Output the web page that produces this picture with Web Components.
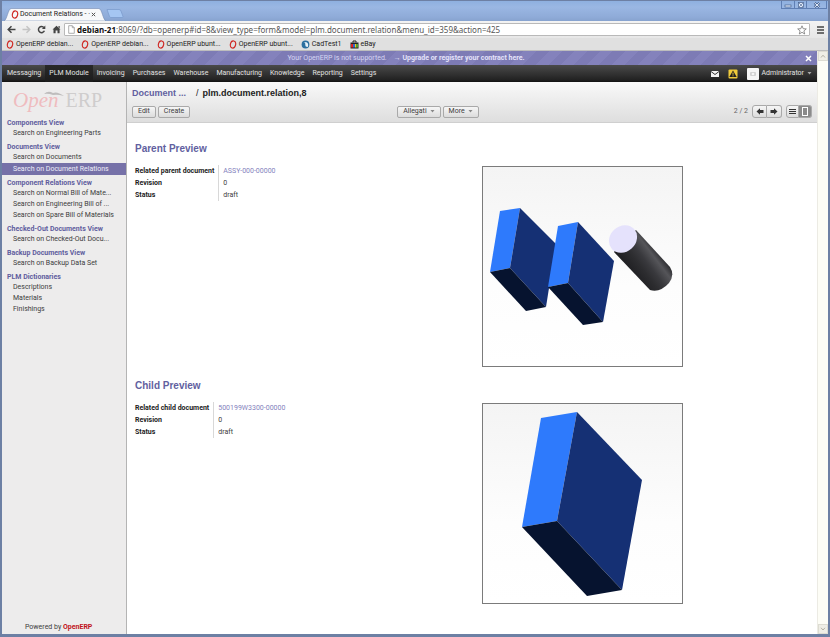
<!DOCTYPE html>
<html lang="en">
<head>
<meta charset="utf-8">
<title>Document Relations - OpenERP</title>
<style>
html,body{margin:0;height:100%}
body{font:7px/11px Roboto,"Liberation Sans",sans-serif;color:#3c3c3c;background:#6d80a4}
</style>
</head>
<body>
<app-window>
  <tab-strip slot="chrome" label="Document Relations - ·"></tab-strip>
  <address-bar slot="chrome" host="debian-21" path=":8069/?db=openerp#id=8&amp;view_type=form&amp;model=plm.document.relation&amp;menu_id=359&amp;action=425"></address-bar>
  <bookmark-bar slot="chrome">
    <book-mark kind="opera">OpenERP debian...</book-mark>
    <book-mark kind="opera">OpenERP debian...</book-mark>
    <book-mark kind="opera">OpenERP ubunt...</book-mark>
    <book-mark kind="opera">OpenERP ubunt...</book-mark>
    <book-mark kind="globe">CadTest1</book-mark>
    <book-mark kind="bag">eBay</book-mark>
  </bookmark-bar>
  <notice-bar slot="page">Your OpenERP is not supported.</notice-bar>
  <nav-bar slot="page" items="Messaging|PLM Module|Invoicing|Purchases|Warehouse|Manufacturing|Knowledge|Reporting|Settings" current="PLM Module"></nav-bar>
  <work-area slot="page">
    <side-menu slot="side">
      <menu-group label="Components View" items="Search on Engineering Parts"></menu-group>
      <menu-group label="Documents View" items="Search on Documents|Search on Document Relations" current="Search on Document Relations"></menu-group>
      <menu-group label="Component Relations View" items="Search on Normal Bill of Mate...|Search on Engineering Bill of ...|Search on Spare Bill of Materials"></menu-group>
      <menu-group label="Checked-Out Documents View" items="Search on Checked-Out Docu..."></menu-group>
      <menu-group label="Backup Documents View" items="Search on Backup Data Set"></menu-group>
      <menu-group label="PLM Dictionaries" items="Descriptions|Materials|Finishings"></menu-group>
    </side-menu>
    <form-header></form-header>
    <preview-section heading="Parent Preview" label="Related parent document" value="ASSY-000-00000" revision="0" status="draft">
      <part-view model="assembly"></part-view>
    </preview-section>
    <preview-section heading="Child Preview" label="Related child document" value="500199W3300-00000" revision="0" status="draft">
      <part-view model="block"></part-view>
    </preview-section>
  </work-area>
</app-window>
<script>
const base = `:host,*{box-sizing:border-box}
button{font:inherit;color:inherit;margin:0;padding:0;border:0;background:none;display:flex;align-items:center;justify-content:center}
a{color:inherit;text-decoration:none}svg{display:block;flex:none}`;
function define(name, render) {
  customElements.define(name, class extends HTMLElement {
    constructor() { super(); this.attachShadow({ mode: 'open' }); }
    connectedCallback() {
      const [css, html] = render(n => (this.getAttribute(n) || '').replace(/&/g, '&amp;'));
      this.shadowRoot.innerHTML = '<style>' + base + css + '</style>' + html;
    }
  });
}
const operaIcon = `<svg width="8" height="9" viewBox="0 0 8 9"><ellipse cx="4" cy="4.5" rx="2.6" ry="3.6" fill="none" stroke="#cf2a26" stroke-width="1.2" transform="rotate(14 4 4.5)"/></svg>`;

define('app-window', () => [`
:host{display:flex;flex-direction:column;min-height:100vh;border:solid #6d80a4;border-width:1px 2px 3px;background:#fff}
.body{flex:1;display:flex}
.page{flex:1;min-width:0;display:flex;flex-direction:column}
`, `<slot name="chrome"></slot><div class="body"><div class="page"><slot name="page"></slot></div><scroll-rail></scroll-rail></div>`]);

define('scroll-rail', () => [`
:host{display:flex;flex-direction:column;justify-content:space-between;width:11px;background:#fdfdf6;border-left:1px solid #ecebe4}
button{height:10px;background:#efeee6;border:1px solid #dddcd2}
`, `<button aria-label="Scroll up"><svg width="6" height="4"><path d="M1 3.5 3 1.2 5 3.5" fill="none" stroke="#b3b1a4"/></svg></button>
<button aria-label="Scroll down"><svg width="6" height="4"><path d="M1 .8 3 3 5 .8" fill="none" stroke="#b3b1a4"/></svg></button>`]);

define('tab-strip', attr => [`
:host{display:flex;align-items:flex-end;height:20px;padding-left:2px;background:linear-gradient(#8eb0e0,#9ab7e3 30%,#8fabd8 80%,#87a3cf);color:#222}
.tab{position:relative;display:flex;align-items:center;height:13px;width:102px;padding:0 5px 0 7px;line-height:13px}
.tab .shape{position:absolute;inset:0;width:100%;height:100%}
.tab span,.tab .ico,.tab button{position:relative}
.tab span{flex:1;margin-left:1px;white-space:nowrap}
.tab button{width:8px;height:9px;margin-right:4px}
.new{align-self:center;width:18px;height:9px;margin-top:5px}
.win{align-self:flex-start;margin-left:auto;display:flex;height:8px;margin-right:1px;border:1px solid #5f7fb4;border-top:0}
.win button{width:12px;height:7px}
.win button+button{border-left:1px solid #5f7fb4}
.win button:last-child{width:20px}
`, `<div class="tab"><svg class="shape" viewBox="0 0 102 13" preserveAspectRatio="none"><path d="M0 13C3 12 4 1 7 .5H95C98 1 99 12 102 13Z" fill="#f7f8fa" stroke="#7389b1" stroke-width=".6"/></svg>
<div class="ico">${operaIcon}</div><span>${attr('label')}</span><button aria-label="Close tab"><svg width="5" height="5"><path d="M.8.8 4.2 4.2M4.2.8.8 4.2" stroke="#555"/></svg></button></div>
<button class="new" aria-label="New tab"><svg width="18" height="9"><path d="M1 .5H13Q14.500.5 15 2L17 7.500Q17 8.500 16 8.500H5Q4 8.500 3.500 7.500Z" fill="#a5c6f2" stroke="#7c9ccd" stroke-width=".8"/></svg></button>
<div class="win"><button aria-label="Minimize"><svg width="8" height="6"><rect x="1" y="3" width="6" height="2" fill="#dfe9f8" stroke="#46618f" stroke-width=".7"/></svg></button>
<button aria-label="Maximize"><svg width="8" height="6"><rect x="1.500" y=".5" width="5" height="5" fill="#dfe9f8" stroke="#46618f" stroke-width=".7"/><path d="M2 1 6 5M6 1 2 5" stroke="#46618f" stroke-width=".6"/></svg></button>
<button aria-label="Close"><svg width="8" height="6"><path d="M1.500.8 6.500 5.200M6.500.8 1.500 5.200" stroke="#46618f" stroke-width="2.200"/><path d="M1.500.8 6.500 5.200M6.500.8 1.500 5.200" stroke="#eaf1fb"/></svg></button></div>`]);

define('address-bar', attr => [`
:host{display:flex;align-items:center;height:17px;padding:0 4px 0 4px;background:linear-gradient(#f3f3f3,#e7e7e7)}
.nav{display:flex;gap:5px}
.nav button{width:10px;height:12px}
form{flex:1;display:flex;align-items:center;height:13px;margin:0 7px 0 3px;padding:0 2px 0 3px;background:#fff;border:1px solid #b9b9b9;border-radius:1px;font:8px/11px "Noto Sans","Open Sans",sans-serif;color:#555;white-space:nowrap}
form b{color:#111;margin-left:2px}
form span{flex:1}
`, `<div class="nav"><button aria-label="Back"><svg width="9" height="9"><path d="M8.500 4.500H1.500M4.500 1.200 1.200 4.500 4.500 7.800" fill="none" stroke="#444" stroke-width="1.500"/></svg></button>
<button aria-label="Forward"><svg width="9" height="9"><path d="M.5 4.500H7.500M4.500 1.200 7.800 4.500 4.500 7.800" fill="none" stroke="#c4c4c4" stroke-width="1.500"/></svg></button>
<button aria-label="Reload"><svg width="9" height="9"><path d="M7 2.600A3.100 3.100 0 1 0 7.400 5.800" fill="none" stroke="#444" stroke-width="1.500"/><path d="M8.300.6V4H4.900Z" fill="#444"/></svg></button>
<button aria-label="Home"><svg width="9" height="9"><path d="M4.500.8 8.500 4.600H7.600V8.200H5.500V5.600H3.600V8.200H1.500V4.600H.5Z" fill="#444"/><path d="M6.500 1H7.700V3.500L6.500 2.500Z" fill="#444"/></svg></button></div>
<form><svg width="7" height="9"><path d="M.7.7H4.300L6.300 2.700V8.300H.7ZM4.300.7V2.700H6.300" fill="#fff" stroke="#999" stroke-width=".8"/></svg><b>${attr('host')}</b><span>${attr('path')}</span>
<button type="button" aria-label="Bookmark this page"><svg width="10" height="10"><path d="M5 .8 6.200 3.700 9.300 3.900 6.900 5.900 7.700 9 5 7.300 2.300 9 3.100 5.900.7 3.900 3.800 3.700Z" fill="#fff" stroke="#777" stroke-width=".8"/></svg></button></form>
<button aria-label="Menu"><svg width="7" height="8"><path d="M0 1H7M0 4H7M0 7H7" stroke="#444" stroke-width="1.700"/></svg></button>`]);

define('bookmark-bar', () => [`
:host{display:flex;align-items:center;gap:8px;height:13px;padding:0 4px;background:#e0e0e0;color:#222;border-bottom:1px solid #bdbdbd}
`, `<slot></slot>`]);

const markIcons = {
  opera: operaIcon,
  globe: `<svg width="9" height="9"><circle cx="4.500" cy="4.500" r="3.900" fill="#2c6f9f"/><path d="M2.200 2Q4.500 2 4.300 4.500T6.800 7Q8 3.500 5.500 2.200Z" fill="#e6f2fa"/></svg>`,
  bag: `<svg width="9" height="9"><path d="M3 2.500V1H6V2.500" fill="none" stroke="#222"/><rect x=".5" y="2.500" width="8" height="6" fill="#222"/><rect x="1" y="4" width="2" height="3.500" fill="#d22"/><rect x="3" y="4" width="2" height="3.500" fill="#36c"/><rect x="5" y="4" width="1.500" height="3.500" fill="#ec2"/><rect x="6.500" y="4" width="1.500" height="3.500" fill="#4a3"/></svg>`
};
define('book-mark', attr => [`
:host{display:block}a{display:flex;align-items:center;gap:2px;white-space:nowrap}
`, `<a href="#">${markIcons[attr('kind')]}<slot></slot></a>`]);

define('notice-bar', () => [`
:host{display:flex;align-items:center;height:14px;padding:0 5px;color:#d6d5f2;white-space:nowrap;background:repeating-linear-gradient(135deg,#7d7bb5 0 9px,#8482bc 9px 18px)}
p{flex:1;margin:0;display:flex;justify-content:center;gap:7px}
a{font-weight:700;color:#e4e3fa}
`, `<p><slot></slot><a href="#">→ Upgrade or register your contract here.</a></p><button aria-label="Close notice"><svg width="7" height="7"><path d="M1 1 6 6M6 1 1 6" stroke="#fff" stroke-width="1.500"/></svg></button>`]);

define('nav-bar', attr => [`
:host{display:flex;align-items:stretch;height:17px;padding:0 5px 0 1px;color:#e2e2e2;background:linear-gradient(#4a4a4a,#232323 85%,#111)}
nav{display:flex;flex:1}
nav a{display:flex;align-items:center;padding:0 4px}
nav a[aria-current]{background:linear-gradient(#292929,#1c1c1c)}
.tools{display:flex;align-items:center;gap:9px}
.user{gap:3px}
`, `<nav>${attr('items').split('|').map(t => `<a href="#"${t === attr('current') ? ' aria-current="page"' : ''}>${t}</a>`).join('')}</nav>
<div class="tools"><button aria-label="Messages"><svg width="8" height="6"><rect width="8" height="6" fill="#f3f3f3"/><path d="M0 .5 4 3.500 8 .5" fill="none" stroke="#333"/></svg></button>
<button aria-label="Warning"><svg width="10" height="10"><rect x=".5" y=".5" width="9" height="9" rx="1" fill="#f0cb3b"/><path d="M5 1.500 8.700 8H1.300Z" fill="#222"/><path d="M5 3.500V5.700M5 6.300V7.300" stroke="#f0cb3b"/></svg></button>
<button class="user"><svg width="12" height="12"><rect width="12" height="12" rx="1" fill="#f6f6f6"/><rect x="3" y="4" width="6" height="4" rx="1" fill="#d3d3d3"/><circle cx="6" cy="6" r="1.300" fill="#f6f6f6"/></svg>Administrator<svg width="5" height="3"><path d="M.5 0H4.500L2.500 2.500Z" fill="#aaa"/></svg></button></div>`]);

define('work-area', () => [`
:host{flex:1;display:flex}
main{flex:1;min-width:0;background:#fff}
`, `<slot name="side"></slot><main><slot></slot></main>`]);

define('side-menu', () => [`
:host{display:flex;flex-direction:column;flex:none;width:125px;background:#edecec;border-right:1px solid #b4b4b4}
.logo{position:relative;display:flex;align-items:center;gap:7px;height:36px;padding-left:11px;font:20px/36px "Liberation Serif",serif;color:#cfcdcd}
.logo i{font-size:21px;color:#efbcbf}
.logo svg{position:absolute;left:42px;top:9px}
nav{flex:1;display:flex;flex-direction:column;gap:3px}
footer{padding:0 0 0 23px;line-height:13px}
footer a{font-weight:700;color:#c0141b}
`, `<div class="logo"><i>Open</i><span>ERP</span><svg width="20" height="6"><path d="M0 3Q4 -1 9 2Q13 0 20 5Q13 3 9 4Q4 2 0 3Z" fill="#bfbdbd"/></svg></div><nav><slot></slot></nav><footer>Powered by <a href="#">OpenERP</a></footer>`]);

define('menu-group', attr => [`
:host{display:block}
h3{margin:0;padding-left:5px;font-size:7px;line-height:10px;color:#5f5d9e}
a{display:block;padding-left:11px;line-height:11px;white-space:nowrap}
a[aria-current]{background:#7671a8;color:#eeedf8;line-height:12px}
`, `<h3>${attr('label')}</h3>${attr('items').split('|').map(t => `<a href="#"${t === attr('current') ? ' aria-current="page"' : ''}>${t}</a>`).join('')}`]);

const caret = `<svg width="5" height="3"><path d="M.5 0H4.500L2.500 2.500Z" fill="#888"/></svg>`;
define('form-header', () => [`
:host{display:flex;flex-direction:column;gap:6px;height:41px;padding:5px 5px 0;border-bottom:1px solid #cfcfcf;background:linear-gradient(#f9f9f9,#dedede)}
h1{display:flex;gap:4px;margin:0;font:700 9px/12px "Liberation Sans",sans-serif;color:#222}
h1 a{color:#625fa0;margin-right:6px}
h1 i{font-style:normal;font-weight:400}
.bar{display:grid;grid-template-columns:39fr 61fr}
.row{display:flex;align-items:center;gap:2px}
.row button{height:12px;padding:0 5px;border:1px solid #a9a9a9;border-radius:2px;background:linear-gradient(#f6f6f6,#dcdcdc);gap:3px}
.pager{margin-left:auto;margin-right:2px;color:#666}
.row .set{display:flex;margin-right:2px}
.row .set:last-child{margin:0}
.row .set button{width:15px;height:13px;padding:0}
.row .views button{width:13px}
.row .set button:first-child{border-radius:3px 0 0 3px}
.row .set button+button{border-left:0;border-radius:0 3px 3px 0}
.row .set button[aria-pressed=true]{background:#8b8b8b}
`, `<h1><a href="#">Document ...</a><i>/</i>plm.document.relation,8</h1>
<div class="bar"><div class="row"><button>Edit</button><button>Create</button></div>
<div class="row"><button>Allegati ${caret}</button><button>More ${caret}</button><span class="pager">2 / 2</span>
<div class="set"><button aria-label="Previous"><svg width="8" height="7"><path d="M.5 3.500 4 .3V2H7.500V5H4V6.700Z" fill="#333"/></svg></button><button aria-label="Next"><svg width="8" height="7"><path d="M7.500 3.500 4 .3V2H.5V5H4V6.700Z" fill="#333"/></svg></button></div>
<div class="set views"><button aria-label="List view"><svg width="7" height="5"><path d="M0 .5H7M0 2.500H7M0 4.500H7" stroke="#333"/></svg></button><button aria-label="Form view" aria-pressed="true"><svg width="6" height="9"><rect x=".5" y=".5" width="5" height="8" fill="#8b8b8b" stroke="#fff"/></svg></button></div></div></div>`]);

define('preview-section', attr => [`
:host{display:block;padding:0 8px;margin-top:13px}
:host(:first-of-type){margin-top:20px}
h2{margin:0 0 10px;font:700 10px/12px "Liberation Sans",sans-serif;color:#625fa0}
.cols{display:grid;grid-template-columns:1fr 1fr;gap:20px;align-items:start}
table{border-collapse:collapse;justify-self:start}
th,td{height:12px;padding:0;text-align:left;line-height:12px}
th{color:#222;padding-right:4px}
td{border-left:1px solid #d8d8d8;padding-left:4px}
a{color:#8482bd}
`, `<h2>${attr('heading')}</h2><div class="cols"><table>
<tr><th scope="row">${attr('label')}</th><td><a href="#">${attr('value')}</a></td></tr>
<tr><th scope="row">Revision</th><td>${attr('revision')}</td></tr>
<tr><th scope="row">Status</th><td>${attr('status')}</td></tr></table><slot></slot></div>`]);

const models = {
  assembly: `<path d="M18 45 38 42 28 102 8 106Z" fill="#2e7afc"/><path d="M38 42 74 78 64 141 28 102Z" fill="#153074"/><path d="M8 106 28 102 64 141 44 145Z" fill="#06132f"/>
<path d="M76 60 96 56 86 117 66 121Z" fill="#2e7afc"/><path d="M96 56 132 95 121 156 86 117Z" fill="#153074"/><path d="M66 121 86 117 121 156 101 159Z" fill="#06132f"/>
<defs><linearGradient id="c" gradientUnits="userSpaceOnUse" x1="141" y1="98" x2="170" y2="76"><stop offset="0" stop-color="#1e1e21"/><stop offset=".35" stop-color="#2d2d30"/><stop offset=".55" stop-color="#39393d"/><stop offset=".8" stop-color="#555559"/><stop offset="1" stop-color="#29292c"/></linearGradient></defs>
<path d="M154 64 188 101Q193 109 187 117 178 127 168 124L132 86 141 73Z" fill="url(#c)"/><ellipse cx="141" cy="73" rx="15" ry="12.800" transform="rotate(-42 141 73)" fill="#e5e2fc"/>`,
  block: `<path d="M59 15 95 9 75 118 40 124Z" fill="#2e7afc"/><path d="M95 9 160 77 140 187 75 118Z" fill="#153074"/><path d="M40 124 75 118 140 187 105 193Z" fill="#06132f"/>`
};
define('part-view', attr => [`
:host{display:block;width:201px;height:201px;margin-top:1px;border:1px solid #7b7b7b;background:linear-gradient(#f4f4f4,#fdfdfd 60%,#fff)}
`, `<svg width="199" height="199" viewBox="1 1 199 199" role="img" aria-label="3D preview">${models[attr('model')]}</svg>`]);
</script>
</body>
</html>
